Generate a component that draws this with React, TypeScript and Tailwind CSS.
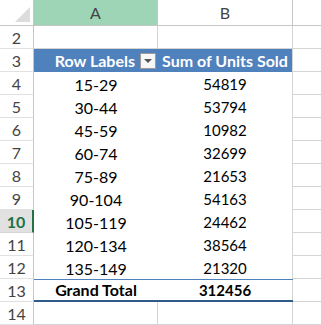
import React from "react";

const data = [
  { row: 4, label: "15-29", value: "54819" },
  { row: 5, label: "30-44", value: "53794" },
  { row: 6, label: "45-59", value: "10982" },
  { row: 7, label: "60-74", value: "32699" },
  { row: 8, label: "75-89", value: "21653" },
  { row: 9, label: "90-104", value: "54163" },
  { row: 10, label: "105-119", value: "24462" },
  { row: 11, label: "120-134", value: "38564" },
  { row: 12, label: "135-149", value: "21320" },
];

function RowNum({ n, active = false }: { n: number; active?: boolean }) {
  if (active)
    return (
      <div className="w-[34px] h-[23px] flex items-center justify-center pt-[1px] bg-[#e1e1e1] border-b border-[#d4d4d4] border-r-2 border-r-[#217346] text-[#217346] font-bold text-[16px]">
        {n}
      </div>
    );
  return (
    <div className="w-[34px] h-[23px] flex items-center justify-center pt-[1px] border-b border-r border-b-[#e1e1e1] border-r-[#c6c6c6] text-[#444] text-[16px]">
      {n}
    </div>
  );
}

export default function App() {
  return (
    <div className="w-[321px] h-[325px] overflow-hidden bg-white text-[15px] leading-none text-black" style={{ fontFamily: "Lato, 'Liberation Sans', sans-serif" }}>
      {/* column headers */}
      <div className="flex h-[26px]">
        <div className="w-[34px] h-[26px] border-r border-b border-[#c6c6c6] flex items-end justify-end pr-[3px] pb-[3px]">
          <svg width="15" height="15" viewBox="0 0 15 15">
            <polygon points="15,0 15,15 0,15" fill="#dcdcdc" />
          </svg>
        </div>
        <div className="w-[124px] h-[26px] bg-[#9fd5b7] border-r border-b border-[#c6c6c6] flex items-center justify-center text-[#444] text-[16px]">A</div>
        <div className="w-[135px] h-[26px] border-r border-b border-[#c6c6c6] flex items-center justify-center text-[#444] text-[16px]">B</div>
        <div className="flex-1 h-[26px] border-b border-[#c6c6c6]"></div>
      </div>

      {/* row 2 */}
      <div className="flex">
        <RowNum n={2} />
        <div className="w-[124px] h-[23px] border-r border-b border-[#d4d4d4]"></div>
        <div className="w-[135px] h-[23px] border-r border-b border-[#d4d4d4]"></div>
        <div className="flex-1 h-[23px] border-b border-[#d4d4d4]"></div>
      </div>

      {/* row 3 pivot header */}
      <div className="flex">
        <RowNum n={3} />
        <div className="w-[124px] h-[23px] bg-[#4f81bd] border-r border-[#4f81bd] flex items-center justify-end gap-[5px] pr-[1px] text-white font-bold text-[16px]">
          <span className="pt-[1px]">Row Labels</span>
          <div className="w-[16px] h-[16px] bg-[#f7f7f7] border border-[#9a9a9a] flex items-center justify-center">
            <svg width="8" height="4" viewBox="0 0 8 4">
              <polygon points="0,0 8,0 4,4" fill="#555" />
            </svg>
          </div>
        </div>
        <div className="w-[135px] h-[23px] bg-[#4f81bd] border-r border-[#d4d4d4] flex items-center justify-center pt-[1px] text-white font-bold text-[16px]">
          Sum of Units Sold
        </div>
        <div className="flex-1 h-[23px] border-b border-[#d4d4d4]"></div>
      </div>

      {data.map((d) => (
        <div key={d.row} className="flex">
          <RowNum n={d.row} active={d.row === 10} />
          <div className="w-[124px] h-[23px] flex items-center justify-center pt-[2px] text-[16px]">{d.label}</div>
          <div className="w-[135px] h-[23px] border-r border-[#d4d4d4] flex items-center justify-center pt-[2px]">{d.value}</div>
          <div className="flex-1 h-[23px] border-b border-[#d4d4d4]"></div>
        </div>
      ))}

      {/* row 13 grand total */}
      <div className="flex">
        <RowNum n={13} />
        <div className="w-[259px] h-[23px] flex border-t border-t-[#4f81bd] border-b-2 border-b-[#2f5a8c] font-bold">
          <div className="w-[124px] flex items-center justify-center text-[16px]">Grand Total</div>
          <div className="w-[135px] flex items-center justify-center border-r border-[#d4d4d4]">312456</div>
        </div>
        <div className="flex-1 h-[23px] border-b border-[#d4d4d4]"></div>
      </div>

      {/* row 14 */}
      <div className="flex">
        <RowNum n={14} />
        <div className="w-[124px] h-[23px] border-r border-b border-[#d4d4d4]"></div>
        <div className="w-[135px] h-[23px] border-r border-b border-[#d4d4d4]"></div>
        <div className="flex-1 h-[23px] border-b border-[#d4d4d4]"></div>
      </div>
    </div>
  );
}
